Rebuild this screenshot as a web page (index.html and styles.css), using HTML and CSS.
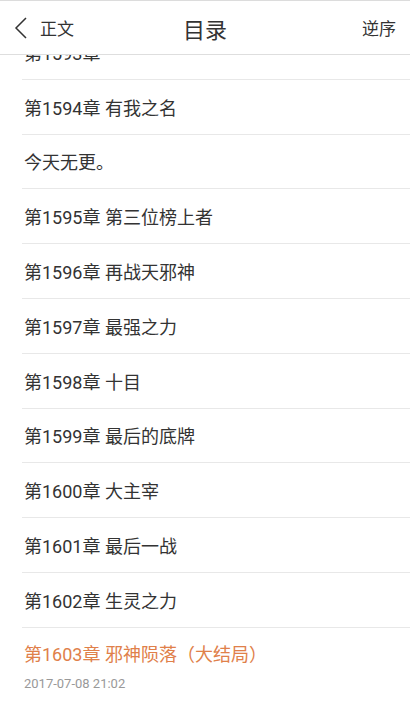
FILE: index.html
```html
<!DOCTYPE html>
<html lang="zh">
<head>
  <meta charset="UTF-8">
  <title>目录</title>
  <link rel="stylesheet" href="styles.css">
</head>
<body>

  <div class="topbar">
    <div class="back">
      <svg width="14" height="22" viewBox="0 0 14 22"><path d="M12 1 L2 11 L12 21" fill="none" stroke="#333" stroke-width="1.5"/></svg>
      <span>正文</span>
    </div>
    <div class="title">目录</div>
    <div class="order">逆序</div>
  </div>

  <ul class="chapters">
    <li>第1593章</li>
    <li>第1594章 有我之名</li>
    <li>今天无更。</li>
    <li>第1595章 第三位榜上者</li>
    <li>第1596章 再战天邪神</li>
    <li>第1597章 最强之力</li>
    <li>第1598章 十目</li>
    <li>第1599章 最后的底牌</li>
    <li>第1600章 大主宰</li>
    <li>第1601章 最后一战</li>
    <li>第1602章 生灵之力</li>
    <li class="last">
      <div class="name">第1603章 邪神陨落（大结局）</div>
      <div class="date">2017-07-08 21:02</div>
    </li>
  </ul>

</body>
</html>
```

FILE: styles.css
```css
html, body { margin: 0; padding: 0; background: #fff; }
body { font-family: Roboto, "Noto Sans CJK SC", sans-serif; color: #333; width: 410px; height: 702px; overflow: hidden; }

.topbar { position: fixed; top: 0; left: 0; right: 0; height: 53px; background: #fff; border-top: 1px solid #dcdcdc; border-bottom: 1px solid #dedede; display: flex; align-items: center; padding: 0 14px; box-sizing: content-box; z-index: 2; }
.back { display: flex; align-items: center; gap: 12px; font-size: 17px; width: 120px; }
.back svg { display: block; }
.title { flex: 1; text-align: center; font-size: 22px; }
.order { width: 120px; text-align: right; font-size: 17px; }

.chapters { list-style: none; margin: 0; padding: 25px 0 0 22px; }
.chapters li { height: 53.8px; border-bottom: 1px solid #e8e8e8; font-size: 18px; display: flex; align-items: center; padding-left: 2px; }
.chapters li.last { height: 75px; border-bottom: none; flex-direction: column; align-items: flex-start; justify-content: flex-start; padding-top: 13px; box-sizing: border-box; }
.last .name { color: #e0804a; font-size: 18px; line-height: 28px; }
.last .date { color: #999; font-size: 13px; line-height: 20px; margin-top: 5px; }
```
